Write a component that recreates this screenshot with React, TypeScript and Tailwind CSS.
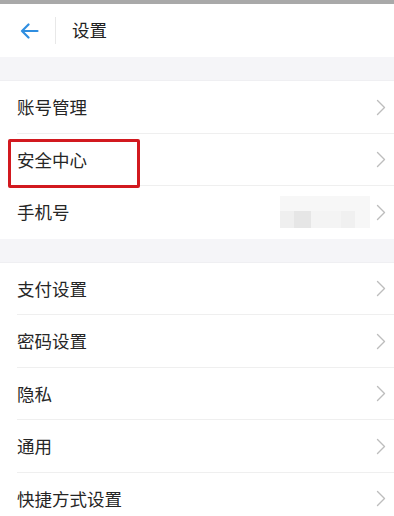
const groups: string[][] = [
  ['账号管理', '安全中心', '手机号'],
  ['支付设置', '密码设置', '隐私', '通用', '快捷方式设置'],
];

const Chevron = () => (
  <svg width="10" height="17" viewBox="0 0 10 17" fill="none" stroke="#bdbdbd" strokeWidth="1.4" strokeLinecap="round" strokeLinejoin="round">
    <path d="M1.5 1.5L8.5 8.5L1.5 15.5" />
  </svg>
);

const Row = ({ label, last, boxed, masked }: { label: string; last: boolean; boxed?: boolean; masked?: boolean }) => (
  <div className="relative flex h-[52.5px] items-center pl-[17px] pr-[8px]">
    <span className="flex-1 text-[17.5px] text-[#262626]">{label}</span>
    {masked && (
      <div className="mr-[6px] flex h-[32px] w-[90px] flex-col bg-[#f7f7f7]">
        <div className="h-[15px]" />
        <div className="flex h-[17px]">
          <div className="w-[14px] bg-[#efefef]" />
          <div className="w-[17px] bg-[#e6e6e6]" />
          <div className="w-[30px] bg-[#f4f4f4]" />
          <div className="w-[14px] bg-[#f0f0f0]" />
        </div>
      </div>
    )}
    <Chevron />
    {boxed && (
      <div className="pointer-events-none absolute left-[8px] top-[5px] z-10 h-[49px] w-[132px] rounded-[2px] border-[3px] border-[#d2191f]" />
    )}
    {!last && <div className="absolute bottom-0 left-[17px] right-0 h-px bg-[#efefef]" />}
  </div>
);

export default function App() {
  return (
    <div
      className="h-[516px] w-[394px] overflow-hidden bg-white"
      style={{ fontFamily: '"Noto Sans CJK SC", "Noto Sans", sans-serif' }}
    >
      <div className="h-[4px] bg-[#a9a9a9]" />
      <div className="flex h-[53px] items-center">
        <div className="flex w-[55px] justify-start pl-[20px]">
          <svg width="19" height="16" viewBox="0 0 19 16" fill="none" stroke="#2f8ee0" strokeWidth="2.2" strokeLinecap="round" strokeLinejoin="round">
            <path d="M17.5 8H2M8.5 1.5L2 8l6.5 6.5" />
          </svg>
        </div>
        <div className="h-[27px] w-px bg-[#e8e8e8]" />
        <span className="ml-[16px] text-[17.5px] text-[#222]">设置</span>
      </div>
      {groups.map((g, gi) => (
        <div key={gi}>
          <div className="h-[24px] border-b border-[#efeff2] bg-[#f5f5f8]" />
          {g.map((label, i) => (
            <Row
              key={label}
              label={label}
              last={i === g.length - 1}
              boxed={label === '安全中心'}
              masked={label === '手机号'}
            />
          ))}
        </div>
      ))}
    </div>
  );
}
